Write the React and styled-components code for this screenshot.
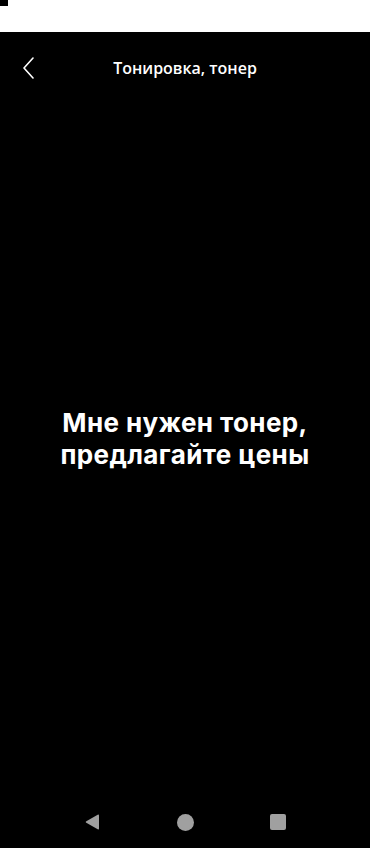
import React from 'react';
import styled, { createGlobalStyle } from 'styled-components';

const GlobalStyle = createGlobalStyle`
  html, body {
    margin: 0;
    padding: 0;
    background: #fff;
  }
  #root {
    min-height: 100vh;
  }
`;

const Page = styled.div`
  width: 370px;
  height: 848px;
  display: flex;
  flex-direction: column;
  background: #fff;
`;

const StatusBar = styled.div`
  height: 32px;
  flex: none;
  background: #fff;
  display: flex;
  align-items: flex-start;
`;

const StatusMark = styled.div`
  width: 8px;
  height: 6px;
  background: #000;
`;

const Screen = styled.div`
  flex: 1;
  background: #000;
  display: flex;
  flex-direction: column;
`;

const Header = styled.div`
  height: 72px;
  display: grid;
  grid-template-columns: 56px 1fr 56px;
  align-items: center;
`;

const BackButton = styled.button`
  background: none;
  border: 0;
  padding: 0 0 0 22px;
  height: 100%;
  display: flex;
  align-items: center;
  cursor: pointer;
`;

const Title = styled.h1`
  margin: 0;
  color: #fff;
  font-family: 'Open Sans', 'Noto Sans', sans-serif;
  font-size: 16px;
  font-weight: 600;
  text-align: center;
`;

const Body = styled.div`
  flex: 1;
  display: flex;
  align-items: center;
  justify-content: center;
  padding-bottom: 24px;
`;

const Message = styled.p`
  margin: 0;
  color: #fff;
  font-family: Inter, 'Liberation Sans', sans-serif;
  font-size: 26px;
  font-weight: 700;
  line-height: 32px;
  text-align: center;
  letter-spacing: 0.4px;
`;

const NavBar = styled.div`
  height: 50px;
  display: flex;
  align-items: center;
  justify-content: center;
  gap: 76px;
  margin-bottom: 1px;
`;

const NavCircle = styled.div`
  width: 17px;
  height: 17px;
  border-radius: 50%;
  background: #a0a0a0;
`;

const NavSquare = styled.div`
  width: 16px;
  height: 16px;
  border-radius: 2px;
  background: #a0a0a0;
`;

export default function App() {
  return (
    <Page>
      <GlobalStyle />
      <StatusBar>
        <StatusMark />
      </StatusBar>
      <Screen>
        <Header>
          <BackButton aria-label="Назад">
            <svg width="14" height="22" viewBox="0 0 14 22" fill="none">
              <path d="M11 1 L2 11 L11 21" stroke="#fff" strokeWidth="1.6" strokeLinecap="round" strokeLinejoin="round" />
            </svg>
          </BackButton>
          <Title>Тонировка, тонер</Title>
          <div />
        </Header>
        <Body>
          <Message>
            Мне нужен тонер,
            <br />
            предлагайте цены
          </Message>
        </Body>
        <NavBar>
          <svg width="17" height="18" viewBox="0 0 17 18">
            <path d="M15 2.5 L15 15.5 Q15 17 13.7 16.3 L2.3 9.8 Q1 9 2.3 8.2 L13.7 1.7 Q15 1 15 2.5 Z" fill="#a0a0a0" />
          </svg>
          <NavCircle />
          <NavSquare />
        </NavBar>
      </Screen>
    </Page>
  );
}
